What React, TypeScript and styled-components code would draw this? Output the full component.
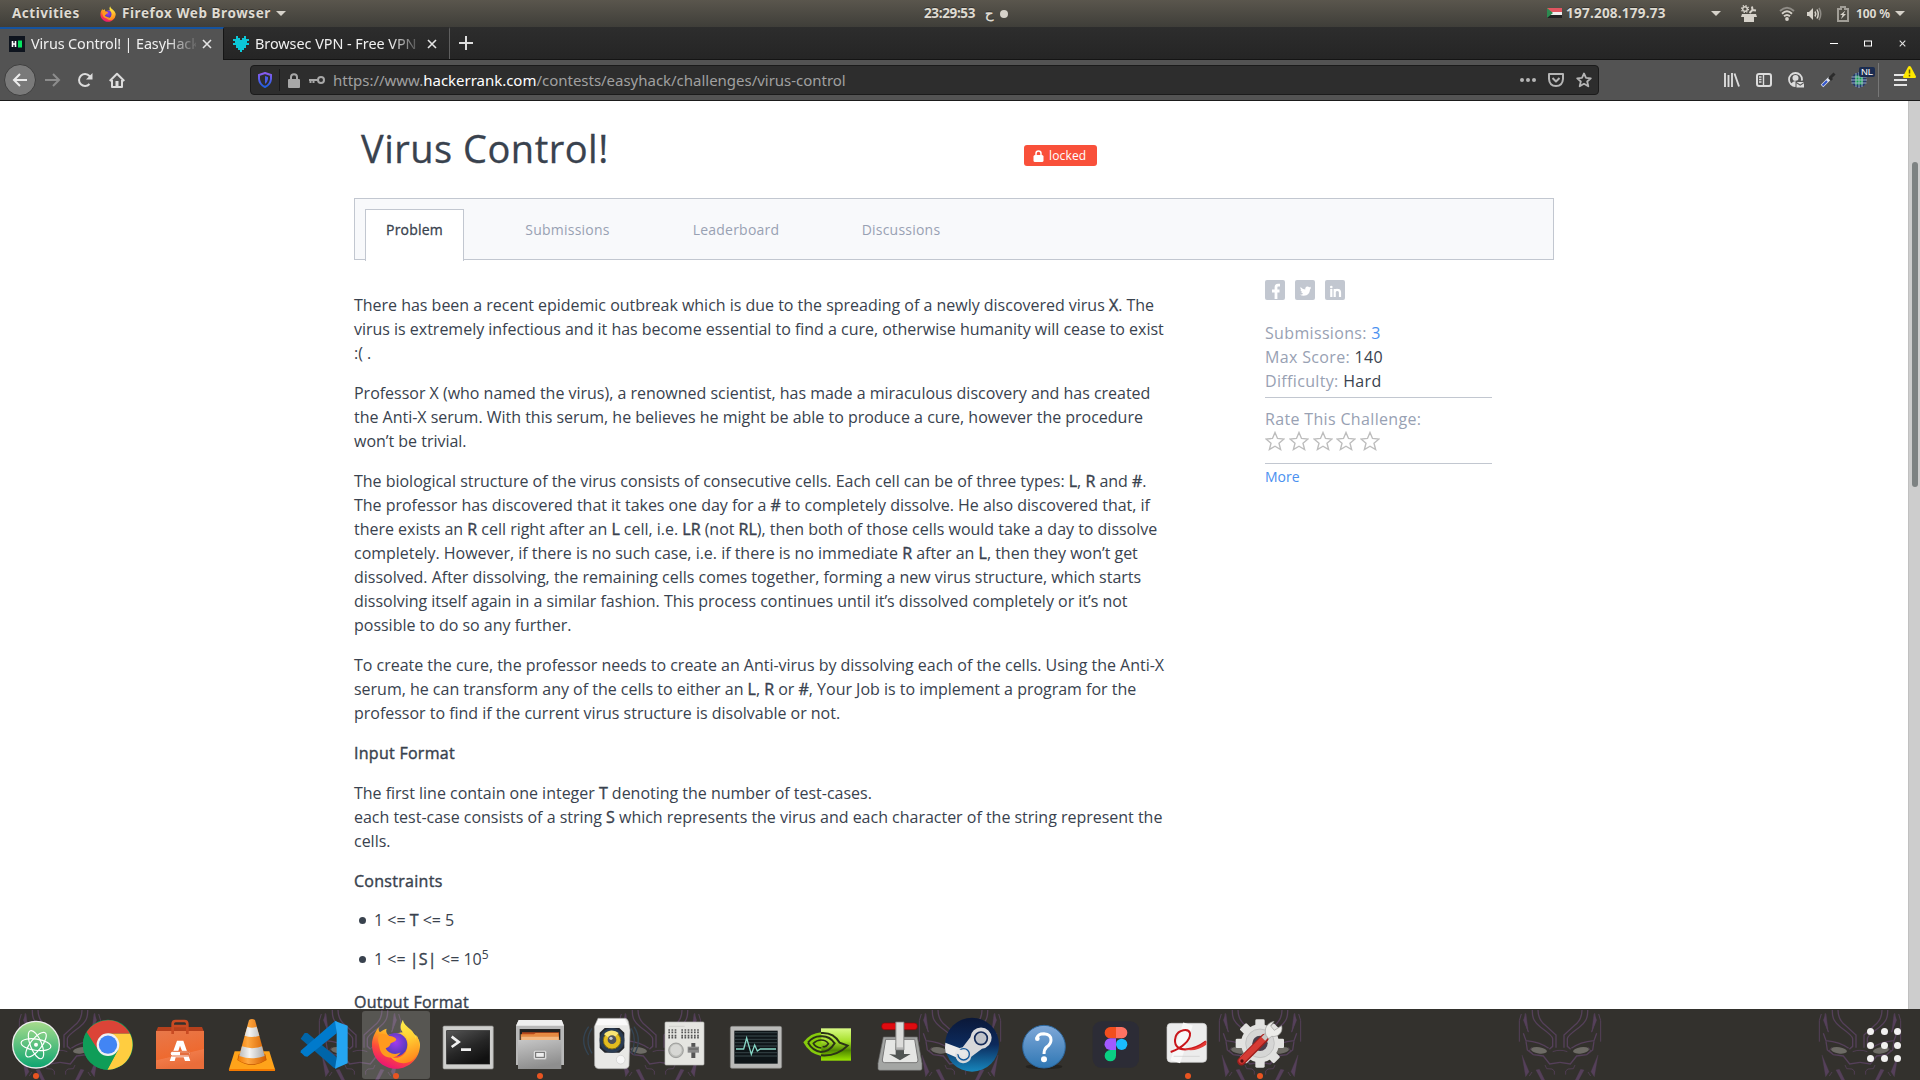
import React from 'react';
import styled, { createGlobalStyle } from 'styled-components';

const Global = createGlobalStyle`
  * { box-sizing: border-box; }
  html, body { margin: 0; padding: 0; background: #fff; overflow: hidden; }
  svg { display: block; flex: none; }
`;

const Screen = styled.div`
  width: 1920px;
  height: 1080px;
  display: flex;
  flex-direction: column;
  overflow: hidden;
  font-family: 'Open Sans', 'Noto Sans', sans-serif;
`;

/* ---------- GNOME top bar ---------- */
const TopBar = styled.div`
  height: 27px;
  flex: none;
  display: grid;
  grid-template-columns: 924px 1fr 373px;
  background: linear-gradient(#5a564d, #3f3e39);
  color: #dfdbd2;
  font: 700 13.5px/27px 'Noto Sans', sans-serif;
  text-shadow: 0 -1px 0 rgba(0, 0, 0, 0.35);
`;
const BarGroup = styled.div`
  display: flex;
  align-items: center;
`;
const BarText = styled.span<{ $w: number; $ls?: number; $ml?: number; $fs?: number }>`
  width: ${(p) => p.$w}px;
  margin-left: ${(p) => p.$ml ?? 0}px;
  letter-spacing: ${(p) => p.$ls ?? 0}px;
  font-size: ${(p) => p.$fs ?? 13.5}px;
  white-space: nowrap;
`;
const Slot = styled.span<{ $w: number; $ml?: number }>`
  width: ${(p) => p.$w}px;
  margin-left: ${(p) => p.$ml ?? 0}px;
  display: flex;
  justify-content: center;
  align-items: center;
  flex: none;
`;
const Caret = styled.span`
  border: 5px solid transparent;
  border-top-color: #d6d2ca;
  border-bottom: 0;
`;
const Dot = styled.span`
  width: 8px;
  height: 8px;
  border-radius: 50%;
  background: #d6d2ca;
`;

/* ---------- Firefox tab strip ---------- */
const TabStrip = styled.div`
  height: 33px;
  flex: none;
  display: flex;
  background: linear-gradient(#2d2d2d, #252525);
  border-bottom: 1px solid #141414;
`;
const BrowserTab = styled.div<{ $active?: boolean }>`
  width: ${(p) => (p.$active ? 224 : 226)}px;
  height: ${(p) => (p.$active ? 33 : 32)}px;
  padding: 0 0 ${(p) => (p.$active ? 2 : 0)}px 9px;
  display: flex;
  align-items: center;
  border-top: 2px solid ${(p) => (p.$active ? '#15539e' : 'transparent')};
  border-right: 1px solid ${(p) => (p.$active ? '#151515' : '#5e5e5e')};
  background: ${(p) => (p.$active ? '#535353' : 'transparent')};
  color: #f0f0f0;
`;
const TabTitle = styled.span<{ $ls: number }>`
  width: 165px;
  margin-left: 6px;
  overflow: hidden;
  white-space: nowrap;
  font: 400 14.4px/28px 'Noto Sans', sans-serif;
  letter-spacing: ${(p) => p.$ls}px;
  mask-image: linear-gradient(90deg, #000 82%, rgba(0, 0, 0, 0.12) 100%);
`;
const WindowButtons = styled.div`
  margin-left: auto;
  width: 103px;
  padding-right: 1px;
  display: grid;
  grid-template-columns: repeat(3, 34px);
  justify-items: center;
  align-items: center;
`;

/* ---------- Firefox toolbar ---------- */
const Toolbar = styled.div`
  height: 41px;
  flex: none;
  display: flex;
  align-items: center;
  padding-left: 4px;
  background: #535353;
  border-bottom: 1px solid #1b1b1b;
`;
const BackButton = styled.div`
  width: 32px;
  height: 32px;
  border-radius: 50%;
  background: #7a7a7a;
  border: 1px solid #3f3f3f;
  display: grid;
  place-items: center;
`;
const UrlBar = styled.div`
  width: 1349px;
  height: 30px;
  margin-left: 117px;
  display: flex;
  align-items: center;
  border: 1px solid #1b1b1b;
  border-radius: 4px;
  background: #2d2d2d;
`;
const UrlDivider = styled.span`
  width: 1px;
  height: 22px;
  background: #1a1a1a;
`;
const Url = styled.span`
  margin-left: 7px;
  color: #a0a0a0;
  font: 400 15px/28px 'Noto Sans', sans-serif;
  letter-spacing: -0.02px;
  white-space: nowrap;
  flex: 1;
  b { font-weight: 400; color: #fff; }
`;
const ToolDivider = styled.span`
  width: 1px;
  height: 34px;
  margin-left: 3px;
  background: #777;
`;
const Badged = styled.span`
  position: relative;
  width: 32px;
  height: 32px;
  display: grid;
  place-items: center;
`;
const CountryBadge = styled.span`
  position: absolute;
  left: 16px;
  top: 3px;
  width: 16px;
  height: 10px;
  border-radius: 2px;
  background: #1b2c50;
  color: #fff;
  font: 400 9.5px/10px 'Liberation Sans', sans-serif;
  text-align: center;
`;
const WarningBadge = styled.span`
  position: absolute;
  left: 19px;
  top: 2px;
`;

/* ---------- Page ---------- */
const Viewport = styled.main`
  height: 908px;
  flex: none;
  display: flex;
  overflow: hidden;
  background: #fff;
`;
const Page = styled.div`
  width: 1908px;
  height: 908px;
  padding: 0 354px;
  overflow: hidden;
  color: #39424e;
`;
const Scrollbar = styled.div`
  width: 12px;
  padding: 61px 0 0 3px;
  background: #cdcdcd;
  border-left: 1px solid #c0c0c0;
`;
const Thumb = styled.div`
  width: 6px;
  height: 325px;
  border-radius: 3px;
  background: #7d8282;
`;
const Header = styled.div`
  height: 97px;
  display: flex;
`;
const Title = styled.h1`
  width: 663px;
  margin: 0;
  padding: 18px 0 0 7px;
  font-size: 38px;
  line-height: 58px;
  font-weight: 400;
  letter-spacing: 0.5px;
  -webkit-text-stroke: 0.3px #39424e;
`;
const Locked = styled.span`
  width: 73px;
  height: 21px;
  margin: 44px 0 0 7px;
  padding-left: 9px;
  display: flex;
  align-items: center;
  gap: 5px;
  border-radius: 3px;
  background: #f9503a;
  color: #fff;
  font-size: 12px;
  letter-spacing: 0.15px;
`;
const NavBox = styled.nav`
  width: 1200px;
  height: 62px;
  display: flex;
  padding: 10px 0 0 10px;
  border: 1px solid #c2c7d0;
  background: #f8f9fb;
`;
const NavTab = styled.a<{ $active?: boolean; $w: number }>`
  width: ${(p) => p.$w}px;
  height: ${(p) => (p.$active ? 52 : 50)}px;
  font-size: 14px;
  line-height: 40px;
  text-align: center;
  letter-spacing: 0.22px;
  color: ${(p) => (p.$active ? '#39424e' : '#98a1b3')};
  background: ${(p) => (p.$active ? '#fff' : 'transparent')};
  border: ${(p) => (p.$active ? '1px solid #c2c7d0' : '1px solid transparent')};
  border-bottom: 0;
  -webkit-text-stroke: ${(p) => (p.$active ? 0.3 : 0)}px currentColor;
`;
const Columns = styled.div`
  display: flex;
`;
const Strong = styled.b`
  font-weight: 400;
  -webkit-text-stroke: 0.4px currentColor;
`;
const Heading = styled(Strong)`
  letter-spacing: 0.28px;
`;
const Statement = styled.article`
  width: 815px;
  padding-top: 33px;
  font-size: 16px;
  line-height: 24px;
  letter-spacing: -0.015px;
  p { margin: 0 0 16px; }
`;
const Bullets = styled.ul`
  margin: -1px 0 19px;
  padding: 0;
  list-style: none;
`;
const Bullet = styled.li`
  height: 24px;
  margin-bottom: 15px;
  display: flex;
  align-items: center;
  white-space: pre;
  &::before {
    content: '';
    width: 7px;
    height: 7px;
    margin: 0 8px 0 5px;
    border-radius: 50%;
    background: #39424e;
  }
  sup { font-size: 12px; line-height: 0; align-self: flex-start; margin-top: 8px; }
`;
const Side = styled.aside`
  width: 227px;
  margin-left: 96px;
  padding-top: 20px;
  font-size: 16px;
  line-height: 24px;
  letter-spacing: 0.34px;
  color: #98a1b3;
`;
const Socials = styled.div`
  display: flex;
  gap: 10px;
  margin-bottom: 21px;
`;
const Facts = styled.div<{ $pb?: number; $mb: number }>`
  padding-bottom: ${(p) => p.$pb ?? 0}px;
  border-bottom: 1px solid #c2c7d0;
  margin-bottom: ${(p) => p.$mb}px;
`;
const Value = styled.span<{ $link?: boolean }>`
  color: ${(p) => (p.$link ? '#4a90f0' : '#39424e')};
`;
const Stars = styled.div`
  display: flex;
  gap: 3.8px;
  height: 32px;
`;
const More = styled.a`
  display: block;
  color: #4a90f0;
  font-size: 14px;
  letter-spacing: 0;
`;

/* ---------- Dock ---------- */
const DockBar = styled.footer`
  position: relative;
  height: 71px;
  flex: none;
  display: flex;
  background: #33312d;
`;
const Wallpaper = styled.svg`
  position: absolute;
  inset: 0;
`;
const DockItem = styled.div<{ $focused?: boolean }>`
  position: relative;
  width: 72px;
  height: 71px;
  &::before {
    content: '';
    display: ${(p) => (p.$focused ? 'block' : 'none')};
    position: absolute;
    inset: 2px 2px 1px;
    border-radius: 3px;
    background: rgba(255, 255, 255, 0.18);
  }
`;
const AppIcon = styled.svg`
  position: relative;
`;
const Running = styled.span`
  position: absolute;
  left: 33px;
  bottom: 1px;
  width: 6px;
  height: 6px;
  border-radius: 50%;
  background: #e95420;
`;
const AppsGrid = styled.div`
  position: relative;
  margin: 19px 19px 0 auto;
  display: grid;
  grid-template-columns: repeat(3, 7px);
  grid-auto-rows: 7px;
  gap: 6.5px;
  i { border-radius: 50%; background: #f2f1f0; }
`;

/* ---------- Small drawings ---------- */
const FoxShapes = () => (
  <>
    <defs>
      <linearGradient id="fxBody" x1="0.8" y1="0.05" x2="0.3" y2="1">
        <stop offset="0" stopColor="#fff44f" />
        <stop offset="0.35" stopColor="#ffa21f" />
        <stop offset="0.65" stopColor="#ff4a3b" />
        <stop offset="1" stopColor="#e8107a" />
      </linearGradient>
      <radialGradient id="fxGlobe" cx="0.5" cy="0.4" r="0.6">
        <stop offset="0" stopColor="#a13bf0" />
        <stop offset="1" stopColor="#4a3bb5" />
      </radialGradient>
      <linearGradient id="fxTail" x1="0.2" y1="0" x2="0.5" y2="1">
        <stop offset="0" stopColor="#fff550" />
        <stop offset="0.5" stopColor="#ffd034" />
        <stop offset="1" stopColor="#ff8a1c" />
      </linearGradient>
    </defs>
    <path fill="url(#fxBody)" d="M108 206C68 206 36 174 36 134C36 114 46 95 56 82C55 90 57 94 60 97C67 91 74 87 80 86C77 92 79 99 84 105L150 92C168 104 180 118 180 134C180 174 148 206 108 206Z" />
    <circle cx="107" cy="134" r="35" fill="url(#fxGlobe)" />
    <path fill="url(#fxTail)" d="M129 59C122 72 118 84 128 97C142 108 148 125 142 146C134 172 106 180 90 168C112 200 160 196 172 160C177 145 181 128 170 105C169 112 168 115 166 117C163 90 148 88 136 74C131 68 129 63 129 59Z" />
    <path fill="#ff9a1e" d="M56 108C62 98 78 102 86 108C96 108 107 112 109 119C105 126 96 127 92 130C91 138 84 142 77 145C82 158 104 168 122 157C108 182 62 178 58 140C56 128 52 120 56 108Z" />
  </>
);

const Half = () => (
  <g fill="none" stroke="#55405a" strokeWidth="4">
    <path d="M-83 30C-84 55-76 68-58 82Q-22 108-22 116V139L-32 148" />
    <path d="M-66 30C-66 52-58 65-44 76L-12 105V143" />
    <path d="M-116 42L-122 62V125M-104 40L-106 62L-95 96" strokeWidth="3" />
    <path d="M-102 42L-95 97L-110 60ZM-114 165L-93 215L-103 230ZM-72 210L-62 208L-46 240H-56Z" fill="#55405a" strokeWidth="1" />
    <path d="M-110 100L-102 122Q-60 126-34 145M-102 124L-98 150L-80 164L-50 168L-31 192L0 187" />
    <path d="M-85 142L-92 153L-80 162M-45 195L-40 206L-24 207L-17 213V224M-92 228L-84 216M-22 155Q-8 150 0 151" strokeWidth="2.5" />
    <ellipse cx="-63" cy="151" rx="24" ry="9.500" fill="#6d6b65" stroke="none" transform="rotate(8 -63 151)" />
  </g>
);

const Masks = () => (
  <Wallpaper width="1920" height="71" viewBox="0 27 5760 213">
    {[60, 360, 660, 960, 1260, 1560, 1860].map((x) => (
      <g key={x} transform={`translate(${x * 3} 0)`}>
        <Half />
        <g transform="scale(-1 1)"><Half /></g>
      </g>
    ))}
  </Wallpaper>
);

const AtomIcon = () => (
  <>
    <defs><linearGradient id="atom" x2="0" y2="1"><stop stopColor="#a8dc8c" /><stop offset="1" stopColor="#0ca470" /></linearGradient></defs>
    <circle cx="108" cy="134" r="70" fill="url(#atom)" stroke="#ececec" strokeWidth="4" />
    <g fill="none" stroke="#fff" strokeWidth="3.500">
      <ellipse cx="108" cy="134" rx="45" ry="17" transform="rotate(8 108 134)" />
      <ellipse cx="108" cy="134" rx="45" ry="17" transform="rotate(68 108 134)" />
      <ellipse cx="108" cy="134" rx="45" ry="17" transform="rotate(-52 108 134)" />
    </g>
    <circle cx="108" cy="134" r="6" fill="#fff" />
  </>
);
const ChromeIcon = () => (
  <>
    <circle cx="108" cy="134" r="75" fill="#0f9d58" />
    <path fill="#db4437" d="M108 134L78 151L44 96A75 75 0 0 1 174 101H108Z" />
    <path fill="#ffcd40" d="M108 101H174A75 75 0 0 1 106 209L138 151Z" />
    <path fill="#0f9d58" d="M42 98L79 151L108 168L136 152L106 209A75 75 0 0 1 42 98Z" />
    <circle cx="108" cy="134" r="34" fill="#f1f1f1" />
    <circle cx="108" cy="134" r="27.500" fill="#4285f4" />
  </>
);
const SoftwareIcon = () => (
  <>
    <defs><linearGradient id="bag" x2="0.3" y2="1"><stop stopColor="#e8784a" /><stop offset="0.7" stopColor="#ee6a30" /><stop offset="0.72" stopColor="#f07a48" /><stop offset="1" stopColor="#e96d3a" /></linearGradient></defs>
    <path fill="#b5401c" d="M42 81H174L180 95H36Z" />
    <path fill="url(#bag)" d="M36 93H180V207H36Z" />
    <path d="M86 102V72Q86 63 95 63H121Q130 63 130 72V102M86 78H130" fill="none" stroke="#c94a22" strokeWidth="8" />
    <path fill="#fff" d="M99 122H118L139 183H123L119 172H95L92 183H77ZM108 137L103 153H114Z" fillRule="evenodd" />
    <rect x="79" y="154" width="59" height="14" rx="6" fill="#fff" stroke="#e46d3d" strokeWidth="3" />
    <path d="M108 161H136" stroke="#e46d3d" strokeWidth="9" />
  </>
);
const VlcIcon = () => (
  <>
    <defs>
      <linearGradient id="vlcO"><stop stopColor="#f57c00" /><stop offset="0.35" stopColor="#ffa840" /><stop offset="1" stopColor="#d45f00" /></linearGradient>
      <linearGradient id="vlcW"><stop stopColor="#bbb" /><stop offset="0.4" stopColor="#f4f4f4" /><stop offset="1" stopColor="#a9a9a9" /></linearGradient>
    </defs>
    <path fill="#ffa31a" d="M56 154H160L177 208V212H39V208Z" />
    <path fill="#c65a00" d="M64 180Q108 210 152 180L148 163H68Z" />
    <path fill="url(#vlcO)" d="M99 60Q108 54 117 60L150 180Q108 206 66 180Z" />
    <path fill="url(#vlcW)" d="M94 80Q108 86 122 80L130 107Q108 115 86 107ZM78 139Q108 150 138 139L146 168Q108 182 70 168Z" />
    <path fill="#f57900" d="M39 207H177V213H39Z" />
  </>
);
const CodeIcon = () => (
  <>
    <path fill="#0065a9" d="M38 116L50 99L58 99L146 172V206L137 203Z" />
    <path fill="#007acc" d="M38 152L141 63L146 64V100L58 170L50 169L38 157Z" />
    <path fill="#24a5f2" d="M141 63L179 77V190L141 206L146 172V98Z" />
  </>
);
const TerminalIcon = () => (
  <>
    <defs><linearGradient id="term" x2="0.6" y2="1"><stop stopColor="#555" /><stop offset="0.6" stopColor="#262626" /><stop offset="1" stopColor="#111" /></linearGradient></defs>
    <rect x="33" y="78" width="151" height="129" rx="4" fill="#cfcfcd" stroke="#8b8b88" strokeWidth="2" />
    <rect x="44" y="92" width="129" height="100" fill="url(#term)" stroke="#1b1b1b" strokeWidth="2" />
    <path d="M59 110L80 126L59 141M87 149H117" fill="none" stroke="#f0f0f0" strokeWidth="8" />
  </>
);
const FilesIcon = () => (
  <>
    <defs><linearGradient id="cab" x2="0.3" y2="1"><stop stopColor="#c6c6c6" /><stop offset="1" stopColor="#8e8e8e" /></linearGradient></defs>
    <path fill="#b8b8b8" d="M44 60H173L180 78V195H36V78Z" />
    <path fill="#efefef" d="M44 60H173L180 77H36Z" />
    <path fill="#222" d="M47 87H169V122H47Z" />
    <path fill="#b8481a" d="M54 97H165V120H52Z" />
    <path fill="#e58a42" d="M50 103H90L95 99H163L166 120H50Z" />
    <path fill="#f4b880" d="M52 110H164V120H52Z" />
    <path fill="url(#cab)" d="M42 120H172V207H42Z" />
    <rect x="88" y="151" width="40" height="28" rx="6" fill="#ddd" stroke="#a0a0a0" strokeWidth="2" />
    <rect x="95" y="157" width="26" height="15" fill="#eee" stroke="#666" strokeWidth="3" />
  </>
);
const SpeakerIcon = () => (
  <>
    <g fill="none" stroke="#344453" strokeWidth="4"><path d="M48 85Q24 120 48 160M38 80Q8 120 38 165M166 85Q184 120 166 160M174 80Q200 120 174 165" /></g>
    <path fill="#e8e8e6" stroke="#aaa" strokeWidth="2" d="M66 55H148Q156 57 158 68L162 90L159 198Q156 206 146 206H68Q58 206 56 196L55 80Z" />
    <path fill="#fafafa" d="M68 57H146L156 76H58Z" />
    <path fill="#23262c" d="M86 84H130L145 98V144L130 158H86L71 144V98Z" />
    <circle cx="108" cy="121" r="37" fill="#293b52" />
    <circle cx="108" cy="121" r="26" fill="#e4bd20" stroke="#877010" strokeWidth="3" />
    <path d="M108 121L84 103A30 30 0 0 1 128 99Z" fill="#f9e474" />
    <circle cx="108" cy="119" r="13" fill="#50535a" />
    <circle cx="105" cy="115" r="5" fill="#c9ccd0" />
    <circle cx="134" cy="179" r="13" fill="#f7f7f7" stroke="#ccc" strokeWidth="2" />
  </>
);
const MixerIcon = () => (
  <>
    <rect x="51" y="66" width="117" height="129" rx="3" fill="#e5e5e1" stroke="#bdbdb8" strokeWidth="2" />
    <g stroke="#555" strokeWidth="5" strokeDasharray="5 4.500">
      <path d="M61 90H88M61 97H88M100 90H156M100 97H156M61 107H88M61 113H88M100 107H156M100 113H156" />
    </g>
    <path d="M63 79H110" stroke="#c9c9c5" strokeWidth="2" />
    <circle cx="84" cy="151" r="22" fill="#bbbcb8" stroke="#858585" strokeWidth="2" />
    <circle cx="84" cy="150" r="17" fill="#d7d7d4" />
    <path d="M136 129V174" stroke="#555" strokeWidth="12" />
    <path d="M119 149H153" stroke="#888" strokeWidth="18" />
    <path d="M122 147H150" stroke="#666" strokeWidth="4" />
  </>
);
const MonitorIcon = () => (
  <>
    <rect x="31" y="79" width="154" height="126" rx="5" fill="#babab8" stroke="#838381" strokeWidth="2" />
    <rect x="43" y="92" width="130" height="99" fill="#0e1518" />
    <g stroke="#2d3a3d" strokeWidth="4"><path d="M45 98H171M45 108H171M45 118H171M45 128H171M45 138H171M45 158H171M45 168H171" /></g>
    <path d="M48 147H71L80 114L94 163L104 135L112 153L121 147H168" fill="none" stroke="#86d6c5" strokeWidth="4" />
  </>
);
const NvidiaIcon = () => (
  <>
    <defs><linearGradient id="nv" x2="0" y2="1"><stop stopColor="#d9fb86" /><stop offset="0.4" stopColor="#a6e02a" /><stop offset="0.68" stopColor="#4f8600" /><stop offset="1" stopColor="#9ae600" /></linearGradient></defs>
    <rect x="87" y="85" width="90" height="97" fill="url(#nv)" />
    <path fill="#86cb0c" d="M88 97Q55 99 34 127Q52 162 88 168Z" />
    <g fill="none" stroke="#2b3316" strokeWidth="6">
      <path d="M87 99Q124 96 143 128L167 137Q134 170 87 166" />
      <path d="M48 128Q64 108 87 109Q112 107 128 130Q112 156 87 156Q62 152 48 128" />
      <path d="M88 144Q70 142 64 130Q74 120 87 120Q102 120 109 131Q100 144 92 139" strokeWidth="5" />
    </g>
  </>
);
const InstallerIcon = () => (
  <>
    <rect x="53" y="69" width="107" height="20" rx="9" fill="#df0b10" stroke="#8d0507" strokeWidth="2" />
    <path fill="#a4a6a4" stroke="#666" strokeWidth="2" d="M58 111H160L174 190V206Q174 211 168 211H48Q42 211 42 206V190Z" />
    <path fill="#e5e6e4" stroke="#777" strokeWidth="3" d="M65 118H152L162 180Q162 188 156 188H62Q54 188 55 180Z" />
    <path fill="#505553" d="M95 130H120V162H140L108 181L75 162L95 164Z" />
    <path fill="#b4b5b3" stroke="#7a7a78" strokeWidth="2" d="M95 66H120V150H95Z" />
    <path fill="#dcdcda" d="M98 68H117V142H98Z" />
  </>
);
const SteamIcon = () => (
  <>
    <defs><linearGradient id="steam" x2="0" y2="1"><stop stopColor="#0b1838" /><stop offset="0.5" stopColor="#0c2a5c" /><stop offset="1" stopColor="#1787bd" /></linearGradient></defs>
    <circle cx="108" cy="134" r="81" fill="url(#steam)" />
    <path fill="#ececec" d="M28 128L72 145L84 180Q66 180 60 172L29 158A81 81 0 0 1 28 128Z" />
    <path fill="#d8d8da" d="M103 112A32 32 0 1 1 138 146L106 170A24 24 0 1 1 80 142Z" />
    <circle cx="135" cy="115" r="19" fill="#bfc2c8" stroke="#142a58" strokeWidth="5" />
    <circle cx="83" cy="163" r="17" fill="#e4e4e4" stroke="#12579a" strokeWidth="4" />
    <path d="M60 152L88 163" stroke="#e8e8e8" strokeWidth="15" />
  </>
);
const HelpIcon = () => (
  <>
    <defs><linearGradient id="help" x2="0" y2="1"><stop stopColor="#7fa8d8" /><stop offset="1" stopColor="#2f77b4" /></linearGradient></defs>
    <ellipse cx="108" cy="200" rx="55" ry="8" fill="#25231f" />
    <circle cx="108" cy="140" r="64" fill="url(#help)" stroke="#2c679e" strokeWidth="3" />
    <path d="M87 114Q89 101 108 101Q129 102 129 120Q129 132 116 141Q108 148 108 162" fill="none" stroke="#fff" strokeWidth="9" />
    <circle cx="88" cy="116" r="7" fill="#fff" />
    <circle cx="108" cy="178" r="9" fill="#fff" />
  </>
);
const FigmaIcon = () => (
  <>
    <rect x="38" y="64" width="139" height="139" rx="26" fill="#2c2c36" />
    <path fill="#f24e1e" d="M108 81H91A17 17 0 0 0 91 115H108Z" />
    <path fill="#ff7262" d="M108 81H125A17 17 0 0 1 125 115H108Z" />
    <path fill="#a259ff" d="M108 115H91A17 17 0 0 0 91 150H108Z" />
    <circle cx="125" cy="133" r="17" fill="#1abcfe" />
    <path fill="#0acf83" d="M108 150H91A17 17 0 1 0 108 167Z" />
  </>
);
const PdfIcon = () => (
  <>
    <rect x="45" y="70" width="119" height="117" rx="12" fill="#ececec" stroke="#d0d0d0" strokeWidth="2" />
    <path d="M108 72L70 185" stroke="#f8f8f8" strokeWidth="30" />
    <path d="M56 156C90 145 116 120 114 100C110 84 79 88 71 110C64 134 76 150 104 148C130 146 146 136 162 124" fill="none" stroke="#c9161b" strokeWidth="6" />
    <path d="M92 145C126 151 142 139 163 122V134C142 150 112 156 92 145Z" fill="#e33a35" />
    <path d="M65 169H143" stroke="#ccc" strokeWidth="2" />
  </>
);
const TweaksIcon = () => (
  <>
    <g fill="#e2e2e0">
      {[0, 45, 90, 135].map((a) => (
        <rect key={a} x="94" y="58" width="28" height="145" rx="4" transform={`rotate(${a} 108 130)`} />
      ))}
      <circle cx="108" cy="130" r="57" />
    </g>
    <circle cx="108" cy="130" r="43" fill="#d6d6d5" stroke="#b5b5b5" strokeWidth="2" />
    <circle cx="108" cy="130" r="23" fill="#4b3f4c" />
    <path d="M52 184L122 114" stroke="#9d1f1d" strokeWidth="25" strokeLinecap="round" />
    <path d="M53 182L122 113" stroke="#d63b35" strokeWidth="18" strokeLinecap="round" />
    <path d="M118 117L138 96" stroke="#c8c8c6" strokeWidth="15" />
    <path fill="#ecece9" stroke="#9b9b99" strokeWidth="2" d="M126 106C120 88 126 70 150 64L140 78L151 91L173 77C178 98 162 112 143 109L134 116Z" />
    <circle cx="54" cy="183" r="5" fill="#50100f" />
  </>
);

const apps: { Icon: React.FC; running?: boolean; focused?: boolean }[] = [
  { Icon: AtomIcon, running: true },
  { Icon: ChromeIcon },
  { Icon: SoftwareIcon },
  { Icon: VlcIcon },
  { Icon: CodeIcon },
  { Icon: FoxShapes, running: true, focused: true },
  { Icon: TerminalIcon },
  { Icon: FilesIcon, running: true },
  { Icon: SpeakerIcon },
  { Icon: MixerIcon },
  { Icon: MonitorIcon },
  { Icon: NvidiaIcon },
  { Icon: InstallerIcon },
  { Icon: SteamIcon },
  { Icon: HelpIcon },
  { Icon: FigmaIcon },
  { Icon: PdfIcon, running: true },
  { Icon: TweaksIcon, running: true },
];

const CloseX = ({ size = 10, w = 1.6 }: { size?: number; w?: number }) => (
  <svg width={size} height={size} viewBox="0 0 10 10"><path d="M1 1L9 9M9 1L1 9" stroke="#e4e4e4" strokeWidth={w} /></svg>
);

const SystemBar = () => (
  <TopBar>
    <BarGroup>
      <BarText $w={68} $ml={12} $ls={0.5}>Activities</BarText>
      <Slot $w={16} $ml={20}><svg width="16" height="16" viewBox="32 56 152 152"><FoxShapes /></svg></Slot>
      <BarText $w={149} $ml={6} $ls={0.56}>Firefox Web Browser</BarText>
      <Slot $w={10} $ml={5}><Caret /></Slot>
    </BarGroup>
    <BarGroup>
      <BarText $w={56} $ls={-0.35}>23:29:53</BarText>
      <BarText $w={11} $ml={5} $fs={13}>ح</BarText>
      <Slot $w={8} $ml={4}><Dot /></Slot>
    </BarGroup>
    <BarGroup>
      <svg width="15" height="11" viewBox="0 0 15 11">
        <path fill="#e05560" d="M0 0H15V4H0Z" /><path fill="#eee" d="M0 4H15V7H0Z" /><path fill="#222" d="M0 7H15V10H0Z" /><path fill="#2c8a50" d="M0 0L6 5L0 10Z" />
      </svg>
      <BarText $w={100} $ml={4} $ls={0.24}>197.208.179.73</BarText>
      <Slot $w={10} $ml={45}><Caret /></Slot>
      <Slot $w={18} $ml={19}>
        <svg width="18" height="17" viewBox="0 0 18 17">
          <circle cx="5" cy="4" r="2.300" fill="none" stroke="#d6d2ca" strokeWidth="1.400" />
          <circle cx="5" cy="4" r="3.500" fill="none" stroke="#d6d2ca" strokeWidth="1.200" strokeDasharray="1.300 1.450" />
          <path d="M9.500 8L13 4.500M12 1.500L12.500 5L16 5.500" stroke="#d6d2ca" strokeWidth="2" fill="none" />
          <path fill="#d6d2ca" d="M2 9H16L17 12H14V17H4V12H1Z" />
        </svg>
      </Slot>
      <Slot $w={16} $ml={21}>
        <svg width="16" height="15" viewBox="0 0 16 15" fill="none" strokeWidth="1.900">
          <path d="M1 5Q8-1.500 15 5" stroke="#8f8c86" /><path d="M3 7.700Q8 3 13 7.700" stroke="#d6d2ca" /><path d="M5 10.300Q8 7.500 11 10.300" stroke="#d6d2ca" />
          <circle cx="8" cy="13" r="1.900" fill="#d6d2ca" />
        </svg>
      </Slot>
      <Slot $w={16} $ml={11}>
        <svg width="16" height="14" viewBox="0 0 16 14" fill="none" strokeWidth="1.500">
          <path fill="#d6d2ca" d="M1 5H3L7 1V13L3 9H1Z" /><path d="M9 4.500Q10.500 7 9 9.500M11 2.500Q13.500 7 11 11.500" stroke="#d6d2ca" /><path d="M13 1Q16.500 7 13 13" stroke="#8f8c86" />
        </svg>
      </Slot>
      <Slot $w={12} $ml={15}>
        <svg width="12" height="16" viewBox="0 0 12 16"><path d="M4 1H8V3H11V15H1V3H4Z" fill="none" stroke="#a19e97" strokeWidth="2" /><path fill="#d6d2ca" d="M8.500 4.500L3 9H5.500L4 13L9 8H6.500Z" /></svg>
      </Slot>
      <BarText $w={34} $ml={7} $fs={12} $ls={-0.1}>100 %</BarText>
      <Slot $w={10} $ml={5}><Caret /></Slot>
    </BarGroup>
  </TopBar>
);

const Tabs = () => (
  <TabStrip>
    <BrowserTab $active>
      <svg width="16" height="16" viewBox="0 0 16 16"><rect width="16" height="16" fill="#0e141e" /><path d="M3.500 5V11M6.500 5V11M3.500 8H6.500" stroke="#fff" strokeWidth="1.600" /><rect x="9" y="4.500" width="4" height="7" fill="#05e45f" /></svg>
      <TabTitle $ls={-0.12}>Virus Control! | EasyHack</TabTitle>
      <Slot $w={22}><CloseX /></Slot>
    </BrowserTab>
    <BrowserTab>
      <svg width="16" height="16" viewBox="0 0 16 16"><path fill="#0cc8d8" d="M3 0H5V2H7V4H9V2H11V0H13V3H16V5H14V7H16V9H13V12H11V14H9V16H7V14H5V12H3V9H0V7H2V5H0V3H3Z" /></svg>
      <TabTitle $ls={-0.03}>Browsec VPN - Free VPN</TabTitle>
      <Slot $w={24}><CloseX /></Slot>
    </BrowserTab>
    <Slot $w={32}><svg width="14" height="14" viewBox="0 0 14 14"><path d="M7 0V14M0 7H14" stroke="#ddd" strokeWidth="2" /></svg></Slot>
    <WindowButtons>
      <svg width="8" height="8"><path d="M0 4.500H8" stroke="#fff" /></svg>
      <svg width="8" height="7"><rect x="0.500" y="1" width="7" height="5" fill="none" stroke="#fff" /></svg>
      <CloseX size={7} w={1.5} />
    </WindowButtons>
  </TabStrip>
);

const NavBar = () => (
  <Toolbar>
    <BackButton><svg width="16" height="14" viewBox="0 0 16 14"><path d="M15 7H2M8 1L2 7L8 13" fill="none" stroke="#ececec" strokeWidth="2" /></svg></BackButton>
    <Slot $w={32} $ml={1}><svg width="16" height="14" viewBox="0 0 16 14"><path d="M0 7H14M8 1L14 7L8 13" fill="none" stroke="#8c8c8c" strokeWidth="2" /></svg></Slot>
    <Slot $w={32}><svg width="16" height="16" viewBox="0 0 16 16"><path d="M12.500 12A6 6 0 1 1 12.500 4L14 6" fill="none" stroke="#dcdcdc" strokeWidth="2" /><path d="M15.500 1V7.500H9Z" fill="#dcdcdc" /></svg></Slot>
    <Slot $w={32}><svg width="16" height="16" viewBox="0 0 16 16"><path d="M0.700 9L8 1.700L15.300 9M3 8V15H13V8" fill="none" stroke="#dcdcdc" strokeWidth="2" strokeLinejoin="round" /><path fill="#dcdcdc" d="M6.500 9H9.500V15H6.500Z" /></svg></Slot>
    <UrlBar>
      <Slot $w={28}>
        <svg width="14" height="16" viewBox="0 0 14 16"><defs><linearGradient id="sh" x2="0" y2="1"><stop stopColor="#8b5cf0" /><stop offset="1" stopColor="#1f5fe0" /></linearGradient></defs><path d="M7 1L13 3V7Q12.500 12.500 7 15Q1.500 12.500 1 7V3Z" fill="none" stroke="url(#sh)" strokeWidth="2" /><path d="M7 4L10 5V7Q9.700 10 7 12Z" fill="#4a5ce8" /></svg>
      </Slot>
      <UrlDivider />
      <Slot $w={28}><svg width="12" height="15" viewBox="0 0 12 15"><path d="M3 7V4Q3 1.200 6 1.200Q9 1.200 9 4V7" fill="none" stroke="#a8a8a8" strokeWidth="2" /><rect y="6" width="12" height="9" rx="1" fill="#a8a8a8" /></svg></Slot>
      <Slot $w={18}><svg width="16" height="8" viewBox="0 0 16 8"><circle cx="12" cy="4" r="3" fill="none" stroke="#a8a8a8" strokeWidth="2" /><path d="M0 4H9M1.500 4V7M4.500 4V7" stroke="#a8a8a8" strokeWidth="2" /></svg></Slot>
      <Url>https://www.<b>hackerrank.com</b>/contests/easyhack/challenges/virus-control</Url>
      <Slot $w={28}><svg width="16" height="4"><g fill="#b5b5b5"><circle cx="2" cy="2" r="2" /><circle cx="8" cy="2" r="2" /><circle cx="14" cy="2" r="2" /></g></svg></Slot>
      <Slot $w={28}><svg width="16" height="14" viewBox="0 0 16 14"><path d="M1 1H15V6Q14.500 13 8 13Q1.500 13 1 6ZM4.500 5L8 8.500L11.500 5" fill="none" stroke="#b5b5b5" strokeWidth="2" strokeLinejoin="round" /></svg></Slot>
      <Slot $w={28}><svg width="16" height="16" viewBox="0 0 16 16"><path d="M8 1.500L10 5.800L14.800 6.300L11.200 9.500L12.300 14.300L8 11.800L3.700 14.300L4.800 9.500L1.200 6.300L6 5.800Z" fill="none" stroke="#b5b5b5" strokeWidth="1.800" strokeLinejoin="round" /></svg></Slot>
    </UrlBar>
    <Slot $w={32} $ml={117}><svg width="16" height="14" viewBox="0 0 16 14"><path d="M1 0V14M4.500 2V14M8 0V14M10.500 0.500L15 13.500" stroke="#dcdcdc" strokeWidth="1.900" /></svg></Slot>
    <Slot $w={32}><svg width="16" height="14" viewBox="0 0 16 14"><rect x="1" y="1" width="14" height="12" rx="2" fill="none" stroke="#dcdcdc" strokeWidth="2" /><path d="M7.500 1V13M3 4H5.500M3 6.500H5.500M3 9H5.500" stroke="#dcdcdc" strokeWidth="1.400" /></svg></Slot>
    <Slot $w={32}><svg width="16" height="16" viewBox="0 0 16 16"><circle cx="7.500" cy="7.500" r="6.500" fill="none" stroke="#dcdcdc" strokeWidth="1.800" /><circle cx="7.500" cy="6" r="3" fill="#dcdcdc" /><path fill="#dcdcdc" d="M2.500 12Q7 7.500 10 10V14Q6 16 2.500 12Z" /><rect x="7.500" y="8.700" width="8.500" height="7.300" fill="#535353" /><path fill="#dcdcdc" d="M8.500 10H16L12.200 12.500ZM8.500 11.300L12.200 13.800L16 11.300V15.500H8.500Z" /></svg></Slot>
    <Slot $w={31}><svg width="16" height="16" viewBox="0 0 16 16"><path d="M2 14L10 6" stroke="#dfe4ef" strokeWidth="3.600" /><path d="M2.500 13.500L7 9" stroke="#3355cc" strokeWidth="2.200" /><path d="M9 5L12 8M10 6L14.500 1.500" stroke="#2c2c2c" strokeWidth="3" /></svg></Slot>
    <Badged>
      <svg width="16" height="16" viewBox="0 0 16 16"><circle cx="8" cy="8" r="7.500" fill="#243a6b" /><rect x="4" y="3.500" width="8" height="9" fill="#11a84b" /><path d="M0.500 5H15.500M0.500 11H15.500M0 8H16M5 1V15M8 0V16M11 1V15" stroke="#a7b9cf" strokeWidth="0.900" /></svg>
      <CountryBadge>NL</CountryBadge>
    </Badged>
    <ToolDivider />
    <Slot $w={5} />
    <Badged>
      <svg width="13" height="12"><path d="M0 1H13M0 6H13M0 11H13" stroke="#e4e4e4" strokeWidth="2" /></svg>
      <WarningBadge><svg width="13" height="12" viewBox="0 0 13 12"><path fill="#ffe900" d="M6.500 0Q7.500 0 8 1L13 10.500Q13 12 12 12H1Q0 12 0 10.500L5 1Q5.500 0 6.500 0Z" /><path d="M6.500 3.500V7.500M6.500 8.800V10.500" stroke="#6e5a00" strokeWidth="1.500" /></svg></WarningBadge>
    </Badged>
  </Toolbar>
);

const SocialSquare = ({ children }: { children: React.ReactNode }) => (
  <svg width="20" height="20" viewBox="0 0 20 20"><rect width="20" height="20" rx="2" fill="#c2c7d0" />{children}</svg>
);

const Sidebar = () => (
  <Side>
    <Socials>
      <SocialSquare><path d="M15 5.200H13Q11 5.200 11 7.500V19M7 11H14.500" stroke="#fff" strokeWidth="2.800" fill="none" /></SocialSquare>
      <SocialSquare><path fill="#fff" d="M5.500 7Q8 9.500 10.300 9.500Q10 6.800 12.300 6.500Q13.500 6.400 14.300 7.200L16 6.700L15.300 8.200L16.200 8L15 9.500Q14.800 13.500 11.500 15.300Q8 16.500 5 14.800Q7.200 14.700 8.200 13.700Q6.500 13.400 6.200 12L7.200 11.900Q5.500 11 5.500 9.700L6.300 9.900Q5 8.600 5.500 7Z" /></SocialSquare>
      <SocialSquare><path d="M6.300 9V17M9.700 9V17M9.700 12Q10 9.700 12.500 9.800Q15 9.800 15 12.500V17" stroke="#fff" strokeWidth="2.200" fill="none" /><circle cx="6.300" cy="7" r="1.300" fill="#fff" /></SocialSquare>
    </Socials>
    <Facts $pb={4} $mb={9}>
      <div>Submissions: <Value $link>3</Value></div>
      <div>Max Score: <Value>140</Value></div>
      <div>Difficulty: <Value>Hard</Value></div>
    </Facts>
    <Facts $mb={1}>
      Rate This Challenge:
      <Stars>
        {[0, 1, 2, 3, 4].map((i) => (
          <svg key={i} width="20" height="20" viewBox="0 0 20 20"><path d="M10 1.500L12.500 7.400L19 8L14 12.200L15.600 18.500L10 15.200L4.400 18.500L6 12.200L1 8L7.500 7.400Z" fill="none" stroke="#bdbdbd" strokeWidth="1.400" /></svg>
        ))}
      </Stars>
    </Facts>
    <More>More</More>
  </Side>
);

const Problem = () => (
  <Statement>
    <p>There has been a recent epidemic outbreak which is due to the spreading of a newly discovered virus <Strong>X</Strong>. The virus is extremely infectious and it has become essential to find a cure, otherwise humanity will cease to exist :( .</p>
    <p>Professor X (who named the virus), a renowned scientist, has made a miraculous discovery and has created the Anti-X serum. With this serum, he believes he might be able to produce a cure, however the procedure won’t be trivial.</p>
    <p>The biological structure of the virus consists of consecutive cells. Each cell can be of three types: <Strong>L</Strong>, <Strong>R</Strong> and <Strong>#</Strong>. The professor has discovered that it takes one day for a <Strong>#</Strong> to completely dissolve. He also discovered that, if there exists an <Strong>R</Strong> cell right after an <Strong>L</Strong> cell, i.e. <Strong>LR</Strong> (not <Strong>RL</Strong>), then both of those cells would take a day to dissolve completely. However, if there is no such case, i.e. if there is no immediate <Strong>R</Strong> after an <Strong>L</Strong>, then they won’t get dissolved. After dissolving, the remaining cells comes together, forming a new virus structure, which starts dissolving itself again in a similar fashion. This process continues until it’s dissolved completely or it’s not possible to do so any further.</p>
    <p>To create the cure, the professor needs to create an Anti-virus by dissolving each of the cells. Using the Anti-X serum, he can transform any of the cells to either an <Strong>L</Strong>, <Strong>R</Strong> or <Strong>#</Strong>, Your Job is to implement a program for the professor to find if the current virus structure is disolvable or not.</p>
    <p><Heading>Input Format</Heading></p>
    <p>The first line contain one integer <Strong>T</Strong> denoting the number of test-cases.<br />each test-case consists of a string <Strong>S</Strong> which represents the virus and each character of the string represent the cells.</p>
    <p><Heading>Constraints</Heading></p>
    <Bullets>
      <Bullet>1 &lt;= <Strong>T</Strong> &lt;= 5</Bullet>
      <Bullet>1 &lt;= <Heading>|S|</Heading> &lt;= 10<sup>5</sup></Bullet>
    </Bullets>
    <p><Heading>Output Format</Heading></p>
  </Statement>
);

export default function App() {
  return (
    <Screen>
      <Global />
      <SystemBar />
      <Tabs />
      <NavBar />
      <Viewport>
        <Page>
          <Header>
            <Title>Virus Control!</Title>
            <Locked>
              <svg width="11" height="12" viewBox="0 0 11 12"><path d="M3 6V3.500Q3 1 5.500 1Q8 1 8 3.500V6" fill="none" stroke="#fff" strokeWidth="1.500" /><rect x="0.500" y="5" width="10" height="7" rx="1.500" fill="#fff" /></svg>
              locked
            </Locked>
          </Header>
          <NavBox>
            <NavTab $active $w={99}>Problem</NavTab>
            <NavTab $w={207}>Submissions</NavTab>
            <NavTab $w={130}>Leaderboard</NavTab>
            <NavTab $w={200}>Discussions</NavTab>
          </NavBox>
          <Columns>
            <Problem />
            <Sidebar />
          </Columns>
        </Page>
        <Scrollbar><Thumb /></Scrollbar>
      </Viewport>
      <DockBar>
        <Masks />
        {apps.map(({ Icon, running, focused }, i) => (
          <DockItem key={i} $focused={focused}>
            <AppIcon width="72" height="71" viewBox="0 27 216 213"><Icon /></AppIcon>
            {running && <Running />}
          </DockItem>
        ))}
        <AppsGrid>{Array.from({ length: 9 }, (_, i) => <i key={i} />)}</AppsGrid>
      </DockBar>
    </Screen>
  );
}
